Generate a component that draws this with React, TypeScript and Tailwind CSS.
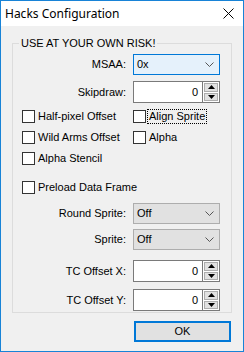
import { ReactNode } from 'react';

const font = { fontFamily: '"Liberation Sans", Arial, sans-serif' };

function Chevron() {
  return (
    <svg width="9" height="6" viewBox="0 0 9 6" className="shrink-0">
      <path d="M0.5 0.5 L4.5 4.5 L8.5 0.5" fill="none" stroke="#555" strokeWidth="1" />
    </svg>
  );
}

function Combo({ value, focused }: { value: string; focused?: boolean }) {
  return (
    <div
      className={`w-[87px] h-[21px] border flex items-center justify-between pl-[3px] pr-[5px] ${
        focused ? 'bg-[#e5f1fb] border-[#0078d7]' : 'bg-[#e1e1e1] border-[#adadad]'
      }`}
    >
      <span>{value}</span>
      <Chevron />
    </div>
  );
}

function Arrow({ up }: { up?: boolean }) {
  return (
    <svg width="7" height="4" viewBox="0 0 7 4">
      <path d={up ? 'M0 4 L3.5 0 L7 4 Z' : 'M0 0 L3.5 4 L7 0 Z'} fill="#000" />
    </svg>
  );
}

function Spin({ value }: { value: string }) {
  return (
    <div className="flex h-[22px] w-[87px]">
      <div className="flex-1 bg-white border border-[#7a7a7a] flex items-center justify-end pr-[4px]">
        {value}
      </div>
      <div className="w-[17px] flex flex-col bg-white border-y border-r border-[#7a7a7a] p-[1px] gap-[1px]">
        <div className="flex-1 bg-[#e1e1e1] border border-[#adadad] flex items-center justify-center">
          <Arrow up />
        </div>
        <div className="flex-1 bg-[#e1e1e1] border border-[#adadad] flex items-center justify-center">
          <Arrow />
        </div>
      </div>
    </div>
  );
}

function Row({ label, children, className = '' }: { label: string; children: ReactNode; className?: string }) {
  return (
    <div className={`flex items-center ${className}`}>
      <div className="w-[114px] text-right pr-[1px]">{label}</div>
      <div className="ml-[6px]">{children}</div>
    </div>
  );
}

function Check({ label, focus }: { label: string; focus?: boolean }) {
  return (
    <div className="flex items-center gap-[3px] whitespace-nowrap">
      <div className="w-[13px] h-[13px] bg-white border border-[#333]" />
      <span className={focus ? 'outline outline-1 outline-dotted outline-black px-[1px] -ml-[1px]' : ''}>{label}</span>
    </div>
  );
}

export default function App() {
  return (
    <div
      className="w-[244px] h-[352px] border border-[#1883d7] bg-[#f0f0f0] flex flex-col text-[11px] text-black leading-[13px]"
      style={font}
    >
      {/* title bar */}
      <div className="h-[25px] bg-white flex items-center justify-between pl-[4px] pr-[9px]">
        <span className="text-[12px] text-black" style={{ fontFamily: '"Noto Sans", "Open Sans", sans-serif' }}>
          Hacks Configuration
        </span>
        <svg width="11" height="11" viewBox="0 0 11 11">
          <path d="M0.5 0.5 L10.5 10.5 M10.5 0.5 L0.5 10.5" stroke="#000" strokeWidth="1" />
        </svg>
      </div>

      <div className="flex flex-col pl-[11px] pt-[11px]">
        <fieldset className="w-[220px] border border-[#dcdcdc] pl-[6px] pb-[1px]">
          <legend className="px-[2px]">USE AT YOUR OWN RISK!</legend>
          <div className="-ml-[6px] flex flex-col">
            <Row label="MSAA:" className="mt-[4px]">
              <Combo value="0x" focused />
            </Row>
            <Row label="Skipdraw:" className="mt-[6px]">
              <Spin value="0" />
            </Row>

            <div className="grid grid-cols-[111px_1fr] pl-[9px] mt-[3px]">
              <div className="h-[21px] flex items-center"><Check label="Half-pixel Offset" /></div>
              <div className="h-[21px] flex items-center"><Check label="Align Sprite" focus /></div>
              <div className="h-[21px] flex items-center"><Check label="Wild Arms Offset" /></div>
              <div className="h-[21px] flex items-center"><Check label="Alpha" /></div>
              <div className="h-[21px] flex items-center col-span-2"><Check label="Alpha Stencil" /></div>
              <div className="h-[21px] flex items-center col-span-2 mt-[8px]"><Check label="Preload Data Frame" /></div>
            </div>

            <Row label="Round Sprite:" className="mt-[5px]">
              <Combo value="Off" />
            </Row>
            <Row label="Sprite:" className="mt-[5px]">
              <Combo value="Off" />
            </Row>
            <Row label="TC Offset X:" className="mt-[10px]">
              <Spin value="0" />
            </Row>
            <Row label="TC Offset Y:" className="mt-[7px]">
              <Spin value="0" />
            </Row>
          </div>
        </fieldset>

        <div className="flex mt-[8px] pl-[122px]">
          <button className="w-[97px] h-[21px] bg-[#e1e1e1] border-2 border-[#0078d7] flex items-center justify-center">
            OK
          </button>
        </div>
      </div>
    </div>
  );
}
